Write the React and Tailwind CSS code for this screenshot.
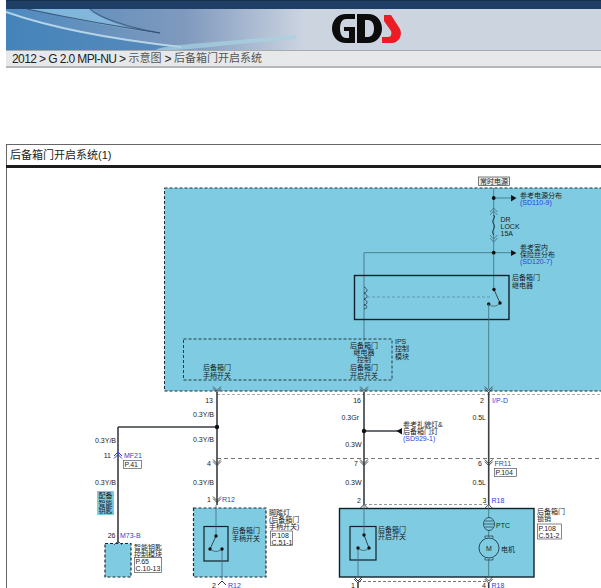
const FONT = '"Liberation Sans","Noto Sans CJK SC",sans-serif';
const BLUE = '#7fcce2';
const LINK = '#2a3fdc';
const WIRE = '#3a3f44';
const THIN = '#3d6b7c';

function T({ x, y, children, size = 7, fill = '#1c1c1c', anchor = 'start' }) {
  const s = Number(size);
  return (
    <text x={x} y={Number(y) + s * 0.36} fontSize={s} fill={fill} textAnchor={anchor} fontFamily={FONT}>
      {children}
    </text>
  );
}

function Dot({ x, y, r = 1.9 }) {
  return <circle cx={x} cy={y} r={r} fill="#111" />;
}

function Down({ x, y, color = '#444' }) {
  return <path d={`M${x - 4} ${y - 3}L${x} ${y + 1}L${x + 4} ${y - 3}M${x - 4} ${y - 1}L${x} ${y + 3}L${x + 4} ${y - 1}`} fill="none" stroke={color} strokeWidth="0.9" />;
}

function Up({ x, y, color = '#444' }) {
  return <path d={`M${x - 4} ${y + 3}L${x} ${y - 1}L${x + 4} ${y + 3}`} fill="none" stroke={color} strokeWidth="1" />;
}

function Ref({ x, y, w, h, lines }) {
  return (
    <g>
      <rect x={x} y={y} width={w} height={h} fill="#fff" stroke="#555" strokeWidth="0.7" />
      {lines.map((l, i) => (
        <T key={l} x={x + 1} y={y + 4 + i * 7.2}>{l}</T>
      ))}
    </g>
  );
}

function Switch({ a, b, c }) {
  return (
    <g>
      <path d={`M${a[0]} ${a[1]}L${c[0]} ${c[1]}`} stroke="#222" strokeWidth="0.8" />
      <path d={`M${b[0]} ${b[1]}Q${(b[0] + c[0]) / 2} ${b[1] + 5} ${c[0]} ${c[1]}`} fill="none" stroke="#333" strokeWidth="0.6" />
      <Dot x={a[0]} y={a[1]} r="1.7" />
      <Dot x={b[0]} y={b[1]} r="1.7" />
      <Dot x={c[0]} y={c[1]} r="1.7" />
    </g>
  );
}

function Diagram() {
  return (
    <svg className="block w-[594px] h-[420px]" viewBox="7 168 594 420">
      {/* main module */}
      <rect x="164.5" y="188" width="440" height="203" fill={BLUE} stroke="#1c2b33" strokeWidth="1" strokeDasharray="3 2" />
      <rect x="478.5" y="177" width="31" height="8.5" fill="#eee" stroke="#444" strokeWidth="0.7" />
      <T x="494" y="181.3" anchor="middle">常时电源</T>

      {/* supply wire */}
      <path d="M493.7 188V289" stroke={THIN} strokeWidth="0.8" fill="none" />
      <path d="M493.7 198H511M364 252.7H511M364 252.7V341" stroke={THIN} strokeWidth="0.8" fill="none" />
      <path d="M511 195V201.500L516.500 198ZM511 250V256L516.500 253Z" fill="#111" />
      <Dot x="493.7" y="198" />
      <Dot x="493.7" y="252.700" />
      <T x="520" y="195.500">参考电源分布</T>
      <T x="520" y="202" fill={LINK}>(SD110-9)</T>
      <T x="520" y="247">参考室内</T>
      <T x="520" y="254">保险丝分布</T>
      <T x="520" y="261" fill={LINK}>(SD120-7)</T>

      {/* fuse */}
      <path d="M490 212L493.700 208L497.400 212M490 215L493.700 211L497.400 215" fill="none" stroke={THIN} strokeWidth="0.8" />
      <path d="M490 235L493.700 239L497.400 235M490 238L493.700 242L497.400 238" fill="none" stroke={THIN} strokeWidth="0.8" />
      <path d="M493.700 215C497 218 490 220 493.700 224C497 228 490 230 493.700 235" fill="none" stroke="#123" strokeWidth="0.8" />
      <T x="500.500" y="219">DR</T>
      <T x="500.500" y="226">LOCK</T>
      <T x="500.500" y="233">15A</T>

      {/* relay */}
      <rect x="354.500" y="275.500" width="154.500" height="44" fill="none" stroke="#10212b" strokeWidth="1.400" />
      <path d="M364 287C368 289 368 292 364 293C368 295 368 298 364 299C368 301 368 304 364 305C368 306 368 308 364 309" fill="none" stroke="#123" strokeWidth="0.7" />
      <path d="M367 297H492" stroke="#5b8fa2" strokeWidth="0.8" strokeDasharray="3 2" />
      <Switch a={[494, 289.500]} b={[488.700, 304]} c={[500, 303]} />
      <path d="M488.700 304V389" stroke={THIN} strokeWidth="0.8" />
      <T x="512" y="277">后备箱门</T>
      <T x="512" y="285">继电器</T>

      {/* IPS */}
      <rect x="183.500" y="339" width="208.500" height="41" fill="none" stroke="#1c2b33" strokeWidth="0.9" strokeDasharray="3 2" />
      <T x="395" y="341">IPS</T>
      <T x="395" y="348.500">控制</T>
      <T x="395" y="356">模块</T>
      <T x="364" y="345.500" anchor="middle">后备箱门</T>
      <T x="364" y="352.500" anchor="middle">继电器</T>
      <T x="364" y="359.500" anchor="middle">控制</T>
      <T x="364" y="367" anchor="middle">后备箱门</T>
      <T x="364" y="375.500" anchor="middle">开启开关</T>
      <T x="217" y="367.500" anchor="middle">后备箱门</T>
      <T x="217" y="375.500" anchor="middle">手柄开关</T>

      {/* harness connectors */}
      <path d="M217 394.500H601" stroke="#aaa" strokeWidth="1" strokeDasharray="3 2" />
      <path d="M217 458.500H601" stroke="#777" strokeWidth="1" strokeDasharray="4 3" />
      <path d="M217 392V505M364 392V505M488.700 392V505M118 427H217M118 427V544M364 431H398" stroke={WIRE} strokeWidth="1.600" fill="none" />
      <path d="M402 428V434.500L396.500 431Z" fill="#111" />
      <Dot x="217" y="427" r="2.200" />
      <Dot x="364" y="431" r="2.200" />
      {[217, 364, 488.700].map((x) => <Down key={x} x={x} y={389.500} />)}
      {[217, 364, 488.700].map((x) => <Down key={x} x={x} y={462.500} color="#333" />)}

      <T x="213" y="400" anchor="end">13</T>
      <T x="361" y="400" anchor="end">16</T>
      <T x="484" y="400" anchor="end">2</T>
      <T x="492" y="400" fill={LINK}>I/P-D</T>
      <T x="214" y="414.700" anchor="end">0.3Y/B</T>
      <T x="214" y="439" anchor="end">0.3Y/B</T>
      <T x="214" y="482" anchor="end">0.3Y/B</T>
      <T x="116" y="440.500" anchor="end">0.3Y/B</T>
      <T x="116" y="482.500" anchor="end">0.3Y/B</T>
      <T x="359" y="417.700" anchor="end">0.3Gr</T>
      <T x="361.500" y="444.500" anchor="end">0.3W</T>
      <T x="361.500" y="482" anchor="end">0.3W</T>
      <T x="486" y="417" anchor="end">0.5L</T>
      <T x="486" y="482" anchor="end">0.5L</T>
      <T x="403" y="424.500">参考礼貌灯&amp;</T>
      <T x="403" y="431.500">后备箱门灯</T>
      <T x="403" y="438" fill={LINK}>(SD929-1)</T>

      <T x="211" y="463" anchor="end">4</T>
      <T x="358" y="463" anchor="end">7</T>
      <T x="482" y="463" anchor="end">6</T>
      <T x="494.500" y="463" fill={LINK}>FR11</T>
      <Ref x={494.500} y={468.500} w={22} h={8} lines={['P.104']} />

      {/* left column */}
      <T x="111" y="455" anchor="end">11</T>
      <Up x={118} y={453} color="#2a3fdc" />
      <Up x={118} y={455.500} color="#2a3fdc" />
      <T x="124" y="455" fill={LINK}>MF21</T>
      <Ref x={123.500} y={460.500} w={18} h={8} lines={['P.41']} />
      <rect x="97" y="491" width="17" height="24" fill={BLUE} />
      <T x="105.500" y="495.500" anchor="middle">配备</T>
      <T x="105.500" y="503" anchor="middle">智能</T>
      <T x="105.500" y="510.500" anchor="middle">钥匙</T>
      <T x="115.500" y="535" anchor="end">26</T>
      <T x="120" y="535" fill={LINK}>M73-B</T>
      <rect x="105" y="543.500" width="26" height="33.500" fill={BLUE} stroke="#1c2b33" strokeWidth="1.200" strokeDasharray="3 2" />
      <Up x={118} y={542} color="#555" />
      <T x="134" y="547">智能钥匙</T>
      <T x="134" y="554.500">控制模块</T>
      <Ref x={134.500} y={557.500} w={27} h={15} lines={['P.65', 'C.10-13']} />

      {/* handle switch */}
      <T x="211" y="499.500" anchor="end">1</T>
      <Down x={217} y={499.500} color="#333" />
      <T x="222" y="499.500" fill={LINK}>R12</T>
      <rect x="193.500" y="508" width="72.500" height="69" fill={BLUE} stroke="#1c2b33" strokeWidth="1.200" strokeDasharray="3 2" />
      <rect x="204" y="526.500" width="24" height="34.500" fill="none" stroke="#10212b" strokeWidth="1.200" />
      <path d="M216 505V536M222 549V580" stroke={THIN} strokeWidth="0.8" />
      <Switch a={[216, 536]} b={[222, 549]} c={[210, 549]} />
      <T x="232" y="530">后备箱门</T>
      <T x="232" y="538">手柄开关</T>
      <T x="269" y="512">脚踏灯</T>
      <T x="269" y="519">(后备箱门</T>
      <T x="269" y="526">手柄开关)</T>
      <Ref x={270.500} y={531} w={22} h={14.500} lines={['P.108', 'C.51-1']} />
      <T x="216" y="585" anchor="end">2</T>
      <Up x={222} y={582} color="#333" />
      <T x="228" y="585" fill={LINK}>R12</T>

      {/* latch */}
      <path d="M364 504.500H488" stroke="#999" strokeWidth="1" strokeDasharray="3 2" />
      <T x="361" y="500.500" anchor="end">2</T>
      <T x="486.500" y="500.500" anchor="end">3</T>
      <T x="491.500" y="500.500" fill={LINK}>R18</T>
      <rect x="339.500" y="508.500" width="194.500" height="68.500" fill={BLUE} stroke="#10212b" strokeWidth="1.400" />
      <Up x={364} y={505.500} color="#444" />
      <Up x={488.700} y={505.500} color="#444" />
      <rect x="350" y="526.500" width="26" height="33.500" fill="none" stroke="#10212b" strokeWidth="1.200" />
      <path d="M364 505V535M358 548V578" stroke={THIN} strokeWidth="0.8" />
      <Switch a={[364, 535]} b={[358, 548]} c={[369, 548]} />
      <T x="378" y="529">后备箱门</T>
      <T x="378" y="536">开启开关</T>
      <T x="537" y="511">后备箱门</T>
      <T x="537" y="518.500">锁销</T>
      <Ref x={537.500} y={524} w={24} h={15} lines={['P.108', 'C.51-2']} />

      {/* PTC + motor */}
      <path d="M488.700 505V518M488.700 530V537M488.700 559V578" stroke={THIN} strokeWidth="0.8" />
      <ellipse cx="489" cy="524" rx="5.500" ry="6.500" fill="none" stroke="#1f3a46" strokeWidth="0.8" />
      <path d="M485 521H493M484 524H494M485 527H493" stroke="#1f3a46" strokeWidth="0.7" />
      <T x="496" y="525">PTC</T>
      <circle cx="489" cy="548" r="10" fill="none" stroke="#1f3a46" strokeWidth="0.9" />
      <path d="M485 538V536H493V538M485 558V560H493V558" fill="none" stroke="#1f3a46" strokeWidth="0.7" />
      <T x="489" y="548" anchor="middle">M</T>
      <T x="501" y="549">电机</T>

      <path d="M358 581.500H488" stroke="#777" strokeWidth="1" strokeDasharray="3 2" />
      <Down x={358} y={580} color="#333" />
      <Down x={488.700} y={580} color="#333" />
      <path d="M358 583V590M488.700 583V590" stroke={WIRE} strokeWidth="1.600" />
      <T x="355" y="585.500" anchor="end">1</T>
      <T x="486" y="585.500" anchor="end">4</T>
      <T x="491.500" y="585.500" fill={LINK}>R18</T>
    </svg>
  );
}

function Swoosh() {
  return (
    <svg className="absolute inset-0 w-full h-full" viewBox="0 0 595 41" preserveAspectRatio="none">
      <path d="M0 0H84C100 14 130 22 154 24C110 20 60 8 21 0H0Z" fill="#8cc3e4" opacity="0.75" />
      <path d="M0 4C40 18 94 30 171 38L150 41H0Z" fill="#3f80b8" opacity="0.6" />
      <path d="M0 3C40 17 94 29 175 38" fill="none" stroke="#c4e0f0" strokeWidth="2" opacity="0.85" />
      <path d="M21 0C40 4 100 16 154 24" fill="none" stroke="#2f4a6c" strokeWidth="1.100" opacity="0.85" />
      <path d="M84 0C92 8 120 18 154 24" fill="none" stroke="#2f4a6c" strokeWidth="1.100" opacity="0.7" />
      <path d="M150 41C158 36 180 36 290 26L290 30C220 36 190 40 170 41Z" fill="#a7d3e2" opacity="0.7" />
    </svg>
  );
}

function Logo() {
  return (
    <svg className="w-[69px] h-[30px] block" viewBox="0 0 69 30">
      <path d="M23 0H14C6 0 0 6 0 14.500S6 29 14 29H23V13H12V17H17V24H14C10 24 8 20 8 14.500S10 5 14 5H23Z" fill="#0c0c0c" />
      <path d="M25 0H36C44 0 50 6 50 14.500S44 29 36 29H25ZM33 6V23H36C40 23 42 19 42 14.500S40 6 36 6Z" fill="#0c0c0c" />
      <path d="M52 1H59L68 15C71 22 66 29 60 29H50V23H56C59 23 60 20 59 17L52 7Z" fill="#ea1c24" />
    </svg>
  );
}

export default function App() {
  return (
    <div className="w-[601px] h-[588px] overflow-hidden bg-white pl-[6px] font-['Liberation_Sans','Noto_Sans_CJK_SC',sans-serif]">
      <div className="h-[9px] bg-[#1f3f66] border-t border-[#17304f]" />
      <div className="relative h-[41px] bg-gradient-to-r from-[#4c8abf] via-[#7f99bd] via-30% to-[#ccd4e0] to-50%">
        <Swoosh />
        <div className="absolute left-[326px] top-[5px]"><Logo /></div>
      </div>
      <div className="h-[18px] flex items-center pl-[6px] bg-[#e7e8e9] border-t border-[#a8aaac] border-b-2 border-b-[#b5b7b9] text-[12px] leading-none tracking-[-0.6px] text-[#222]">
        2012 &gt; G 2.0 MPI-NU &gt;<span className="mx-[3px] text-[11px] tracking-normal text-[#555]">示意图</span>&gt;<span className="ml-[3px] text-[11px] tracking-normal text-[#555]">后备箱门开启系统</span>
      </div>
      <div className="mt-[76px] h-[21px] flex items-center pl-[3px] border-t border-l border-[#666] text-[11px] leading-none text-[#222]">
        后备箱门开启系统(1)
      </div>
      <div className="h-[3px] bg-[#1c1c1c]" />
      <div className="border-l border-[#666]">
        <Diagram />
      </div>
    </div>
  );
}
